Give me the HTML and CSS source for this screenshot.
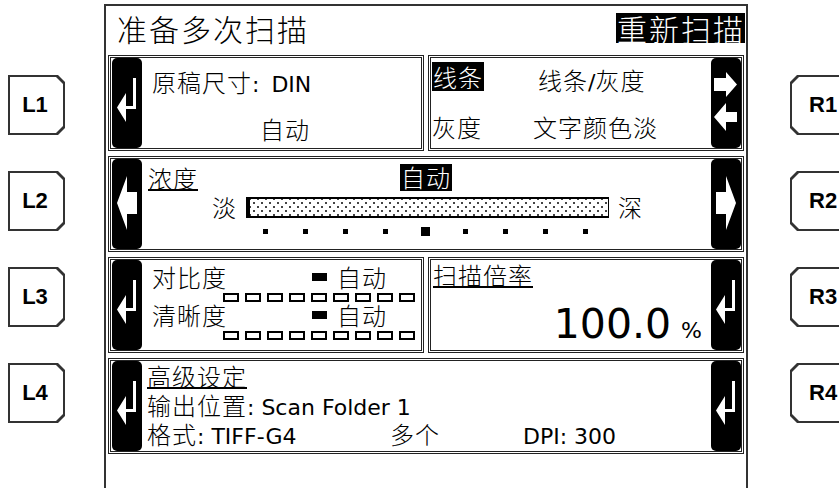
FILE: index.html
```html
<!doctype html>
<html lang="zh">
<head>
    <meta charset="UTF-8">
    <title>准备多次扫描</title>
    <link rel="stylesheet" href="styles.css">
</head>
<body>
<div class="keys keys-left">
    <div class="key key-l"><div class="key-in"><span class="key-label">L1</span></div></div>
    <div class="key key-l"><div class="key-in"><span class="key-label">L2</span></div></div>
    <div class="key key-l"><div class="key-in"><span class="key-label">L3</span></div></div>
    <div class="key key-l"><div class="key-in"><span class="key-label">L4</span></div></div>
</div>

<div class="screen">
    <div class="head">
        <span class="head-title">准备多次扫描</span>
        <span class="head-btn">重新扫描</span>
    </div>

    <div class="rows">
        <!-- L1 / R1 -->
        <div class="row">
            <div class="panel">
                <div class="tab tab-l">
                    <svg width="30" height="90" viewBox="0 0 30 90"><path d="M21 20h3v31H14v-3h7z M5 49.5L14 35V64z" fill="#fff"/></svg>
                </div>
                <div class="pbody size-body">
                    <div class="line"><span class="cn">原稿尺寸</span>: <span class="gap">DIN</span></div>
                    <div class="line size-auto"><span class="cn">自动</span></div>
                </div>
            </div>
            <div class="panel">
                <div class="pbody mode-body">
                    <div class="line"><span class="cn inv">线条</span></div>
                    <div class="line mode-alt1"><span class="cn">线条</span>/<span class="cn">灰度</span></div>
                    <div class="line"><span class="cn">灰度</span></div>
                    <div class="line"><span class="cn">文字颜色淡</span></div>
                </div>
                <div class="tab tab-r">
                    <svg width="30" height="90" viewBox="0 0 30 90"><path d="M3 20h12v-6l11 12.5-11 12.5v-6H3z M26 54H15v-9L3 59l12 14v-9h11z" fill="#fff"/></svg>
                </div>
            </div>
        </div>

        <!-- L2 / R2 -->
        <div class="row">
            <div class="panel">
                <div class="tab tab-l">
                    <svg width="30" height="90" viewBox="0 0 30 90"><path d="M5 44L15 17V33H25V55H15V71z" fill="#fff"/></svg>
                </div>
                <div class="pbody dens-body">
                    <div class="dens-head">
                        <span class="cn ul">浓度</span>
                        <span class="cn inv">自动</span>
                    </div>
                    <div class="dens-row">
                        <span class="cn">淡</span>
                        <div class="dens-bar"></div>
                        <span class="cn">深</span>
                    </div>
                    <div class="dens-dots">
                        <span class="dot-cell"><i class="dot"></i></span>
                        <span class="dot-cell"><i class="dot"></i></span>
                        <span class="dot-cell"><i class="dot"></i></span>
                        <span class="dot-cell"><i class="dot"></i></span>
                        <span class="dot-cell"><i class="dot dot-big"></i></span>
                        <span class="dot-cell"><i class="dot"></i></span>
                        <span class="dot-cell"><i class="dot"></i></span>
                        <span class="dot-cell"><i class="dot"></i></span>
                        <span class="dot-cell"><i class="dot"></i></span>
                    </div>
                </div>
                <div class="tab tab-r">
                    <svg width="30" height="90" viewBox="0 0 30 90"><path d="M25 44L15 17V33H5V55H15V71z" fill="#fff"/></svg>
                </div>
            </div>
        </div>

        <!-- L3 / R3 -->
        <div class="row">
            <div class="panel">
                <div class="tab tab-l">
                    <svg width="30" height="90" viewBox="0 0 30 90"><path d="M21 20h3v31H14v-3h7z M5 49.5L14 35V64z" fill="#fff"/></svg>
                </div>
                <div class="pbody adj-body">
                    <div class="adj-line">
                        <span class="cn">对比度</span>
                        <span class="adj-val"><i class="adj-mark"></i><span class="cn">自动</span></span>
                    </div>
                    <div class="boxes">
                        <i></i><i></i><i></i><i></i><i></i><i></i><i></i><i></i><i></i>
                    </div>
                    <div class="adj-line">
                        <span class="cn">清晰度</span>
                        <span class="adj-val"><i class="adj-mark"></i><span class="cn">自动</span></span>
                    </div>
                    <div class="boxes">
                        <i></i><i></i><i></i><i></i><i></i><i></i><i></i><i></i><i></i>
                    </div>
                </div>
            </div>
            <div class="panel">
                <div class="pbody zoom-body">
                    <div class="line-sm"><span class="cn ul">扫描倍率</span></div>
                    <div class="zoom-val">
                        <span class="zoom-num">100.0</span>
                        <span class="zoom-pct">%</span>
                    </div>
                </div>
                <div class="tab tab-r">
                    <svg width="30" height="90" viewBox="0 0 30 90"><path d="M21 20h3v31H14v-3h7z M5 49.5L14 35V64z" fill="#fff"/></svg>
                </div>
            </div>
        </div>

        <!-- L4 / R4 -->
        <div class="row">
            <div class="panel">
                <div class="tab tab-l">
                    <svg width="30" height="90" viewBox="0 0 30 90"><path d="M21 20h3v31H14v-3h7z M5 49.5L14 35V64z" fill="#fff"/></svg>
                </div>
                <div class="pbody adv-body">
                    <div class="line-sm"><span class="cn ul">高级设定</span></div>
                    <div class="line-sm"><span class="cn">输出位置</span>: Scan Folder 1</div>
                    <div class="line-sm">
                        <span class="adv-c1"><span class="cn">格式</span>: TIFF-G4</span><span class="adv-c2"><span class="cn">多个</span></span><span>DPI: 300</span>
                    </div>
                </div>
                <div class="tab tab-r">
                    <svg width="30" height="90" viewBox="0 0 30 90"><path d="M21 20h3v31H14v-3h7z M5 49.5L14 35V64z" fill="#fff"/></svg>
                </div>
            </div>
        </div>
    </div>
</div>

<div class="keys keys-right">
    <div class="key key-r"><div class="key-in"><span class="key-label">R1</span></div></div>
    <div class="key key-r"><div class="key-in"><span class="key-label">R2</span></div></div>
    <div class="key key-r"><div class="key-in"><span class="key-label">R3</span></div></div>
    <div class="key key-r"><div class="key-in"><span class="key-label">R4</span></div></div>
</div>
</body>
</html>
```

FILE: styles.css
```css
body {
    margin: 0;
    padding: 0;
    width: 839px;
    height: 488px;
    overflow: hidden;
    display: flex;
    background: #fff;
    color: #000;
    font-family: "DejaVu Sans", "Noto Sans CJK SC", sans-serif;
    font-size: 22px;
}
i {
    display: block;
}
.cn {
    font-family: "Noto Sans CJK SC", sans-serif;
    font-size: 24px;
    font-weight: 300;
    letter-spacing: 1px;
}
.gap {
    margin-left: 5px;
}
.inv {
    background: #000;
    color: #fff;
}
.ul {
    text-decoration: underline;
    text-decoration-thickness: 2px;
    text-underline-offset: 1px;
}

/* hardware keys */
.keys {
    display: flex;
    flex-direction: column;
    gap: 36px;
    padding-top: 75px;
    flex-shrink: 0;
}
.keys-left {
    width: 96px;
    padding-left: 8px;
}
.keys-right {
    padding-left: 42px;
}
.key {
    width: 57px;
    height: 60px;
    box-sizing: border-box;
    padding: 2px;
    background: #333;
    flex-shrink: 0;
}
.key-in {
    height: 100%;
    background: #fff;
    display: flex;
    align-items: center;
}
.key-l,
.key-l .key-in {
    clip-path: polygon(0 0, calc(100% - 7px) 0, 100% 7px, 100% calc(100% - 7px), calc(100% - 7px) 100%, 0 100%);
}
.key-l .key-in {
    justify-content: center;
    padding-right: 3px;
}
.key-r,
.key-r .key-in {
    clip-path: polygon(7px 0, 100% 0, 100% 100%, 7px 100%, 0 calc(100% - 7px), 0 7px);
}
.key-r .key-in {
    padding-left: 17px;
}
.key-label {
    font-family: "Liberation Sans", sans-serif;
    font-weight: bold;
    font-size: 22px;
}

/* lcd screen */
.screen {
    margin-top: 4px;
    width: 640px;
    border: 2px solid #333;
    border-bottom: 0;
    flex-shrink: 0;
}
.head {
    height: 43px;
    padding: 0 1px 6px 11px;
    display: flex;
    align-items: center;
    justify-content: space-between;
    font-family: "Noto Sans CJK SC", sans-serif;
    font-size: 30px;
    font-weight: 300;
    letter-spacing: 2px;
    line-height: 30px;
}
.head-btn {
    background: #000;
    color: #fff;
    padding-left: 1px;
}
.rows {
    display: flex;
    flex-direction: column;
    gap: 5px;
    padding: 0 2px;
}
.row {
    display: flex;
    gap: 4px;
    height: 96px;
}
.panel {
    flex: 1;
    display: flex;
    border: 3px double #222;
}
.tab {
    width: 30px;
    flex-shrink: 0;
    background: #000;
    border-radius: 5px;
}
.tab svg {
    display: block;
}
.tab-l {
    margin-left: 1px;
}
.pbody {
    flex: 1;
    min-width: 0;
    white-space: nowrap;
}
.line {
    line-height: 44px;
}
.line-sm {
    line-height: 26px;
}
.line-sm .cn {
    display: inline-block;
    line-height: 26px;
}

/* row 1 */
.size-body {
    padding: 2px 0 0 10px;
}
.size-auto {
    padding-left: 108px;
}
.mode-body {
    display: grid;
    grid-template-columns: 101px 1fr;
    padding-left: 1px;
}
.mode-body .inv {
    display: inline-block;
    line-height: 29px;
    padding: 0 1px;
}
.mode-alt1 {
    padding-left: 5px;
}

/* row 2 */
.dens-body {
    padding: 5px 0 0 6px;
}
.dens-head {
    display: grid;
    grid-template-columns: 252px auto;
    line-height: 27px;
}
.dens-head .inv {
    justify-self: start;
    line-height: 25px;
    padding: 0 1px;
}
.dens-row {
    display: flex;
    align-items: center;
    gap: 9px;
    padding-left: 64px;
    margin-top: 4px;
    line-height: 24px;
}
.dens-bar {
    width: 358px;
    height: 17px;
    border: 2px solid #000;
    border-left-width: 4px;
    border-right-width: 1px;
    background-image:
        radial-gradient(circle, #000 0.6px, transparent 1px),
        radial-gradient(circle, #000 0.6px, transparent 1px);
    background-size: 8px 8px;
    background-position: 0 0, 4px 4px;
}
.dens-dots {
    display: flex;
    padding-left: 97px;
    margin-top: 7px;
    height: 10px;
    align-items: center;
}
.dot-cell {
    width: 40px;
    display: flex;
    justify-content: center;
}
.dot {
    width: 5px;
    height: 5px;
    background: #000;
}
.dot-big {
    width: 9px;
    height: 9px;
}

/* row 3 */
.adj-body {
    padding: 4px 0 0 10px;
}
.adj-line {
    display: grid;
    grid-template-columns: 160px auto;
    line-height: 26px;
}
.adj-val {
    display: flex;
    align-items: center;
    gap: 10px;
}
.adj-mark {
    width: 15px;
    height: 8px;
    background: #000;
}
.boxes {
    display: flex;
    gap: 6px;
    padding: 3px 0 0 71px;
    height: 9px;
}
.boxes i {
    width: 12px;
    height: 5px;
    border: 2px solid #000;
}
.zoom-body {
    padding: 2px 0 0 2px;
}
.zoom-val {
    display: flex;
    justify-content: flex-end;
    align-items: baseline;
    gap: 10px;
    padding: 11px 9px 0 0;
}
.zoom-num {
    font-size: 41px;
    line-height: 44px;
}
.zoom-pct {
    font-size: 22px;
}

/* row 4 */
.adv-body {
    padding: 2px 0 0 5px;
}
.adv-c1,
.adv-c2 {
    display: inline-block;
}
.adv-c1 {
    width: 243px;
}
.adv-c2 {
    width: 133px;
}
```
